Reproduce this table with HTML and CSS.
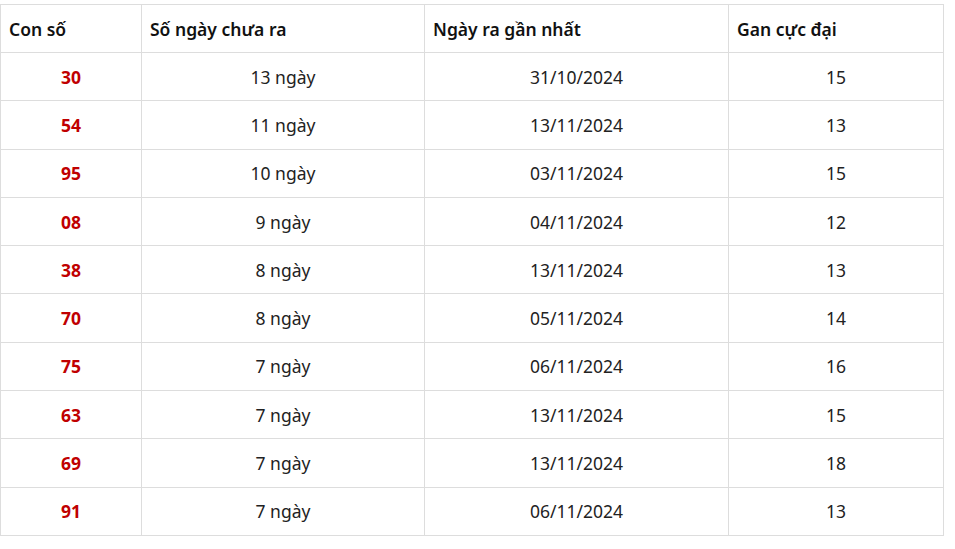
FILE: index.html
```html
<!DOCTYPE html>
<html>
<head>
<meta charset="utf-8">
<link rel="stylesheet" href="styles.css">
</head>
<body>
<table class="gan">
  <colgroup>
    <col class="c1"><col class="c2"><col class="c3"><col class="c4">
  </colgroup>
  <thead>
    <tr><th>Con số</th><th>Số ngày chưa ra</th><th>Ngày ra gần nhất</th><th>Gan cực đại</th></tr>
  </thead>
  <tbody>
    <tr><td class="num">30</td><td>13 ngày</td><td>31/10/2024</td><td>15</td></tr>
    <tr><td class="num">54</td><td>11 ngày</td><td>13/11/2024</td><td>13</td></tr>
    <tr><td class="num">95</td><td>10 ngày</td><td>03/11/2024</td><td>15</td></tr>
    <tr><td class="num">08</td><td>9 ngày</td><td>04/11/2024</td><td>12</td></tr>
    <tr><td class="num">38</td><td>8 ngày</td><td>13/11/2024</td><td>13</td></tr>
    <tr><td class="num">70</td><td>8 ngày</td><td>05/11/2024</td><td>14</td></tr>
    <tr><td class="num">75</td><td>7 ngày</td><td>06/11/2024</td><td>16</td></tr>
    <tr><td class="num">63</td><td>7 ngày</td><td>13/11/2024</td><td>15</td></tr>
    <tr><td class="num">69</td><td>7 ngày</td><td>13/11/2024</td><td>18</td></tr>
    <tr><td class="num">91</td><td>7 ngày</td><td>06/11/2024</td><td>13</td></tr>
  </tbody>
</table>
</body>
</html>
```
FILE: styles.css
```css
html, body {
  margin: 0;
  padding: 0;
  background: #fff;
}
body {
  padding-top: 4px;
  font-family: "Noto Sans", "Open Sans", sans-serif;
  color: #222;
}
.gan {
  border-collapse: collapse;
  width: 943px;
  table-layout: fixed;
  font-size: 17.5px;
}
.c1 { width: 141px; }
.c2 { width: 283px; }
.c3 { width: 304px; }
.c4 { width: 215px; }
.gan th, .gan td {
  border: 1px solid #dddddd;
  padding: 0 8px;
  box-sizing: border-box;
}
.gan th {
  text-align: left;
  font-weight: 600;
  font-size: 17.5px;
  color: #111;
  height: 48px;
}
.gan td {
  text-align: center;
  height: 48.3px;
}
.gan td.num {
  color: #c00000;
  font-weight: 700;
}
```
